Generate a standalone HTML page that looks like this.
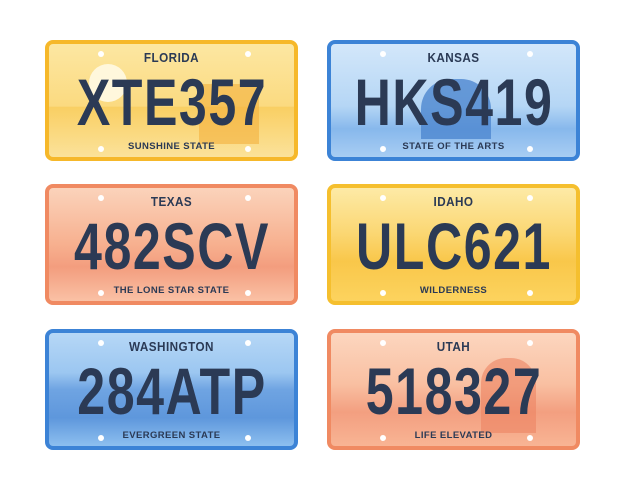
<html><head><style>
body{margin:0;width:626px;height:492px;background:#fff;position:relative;overflow:hidden;font-family:"Liberation Sans",sans-serif}
.p{position:absolute;width:245px;height:113px;border:4px solid;border-radius:8px;overflow:hidden}
.h{position:absolute;width:6px;height:6px;border-radius:50%;background:#fff}
.st{position:absolute;left:0;right:0;text-align:center;font-weight:bold;color:#2b3a55;font-size:13px;letter-spacing:0.5px;top:6px;transform:scaleX(0.9)}
.sl{position:absolute;left:0;right:0;text-align:center;font-weight:bold;color:#2b3a55;font-size:9.5px;letter-spacing:0.4px;bottom:5px}
.n{position:absolute;left:50%;top:25px;white-space:nowrap;font-weight:bold;color:#2b3a55;font-size:66px;line-height:66px;transform:translateX(-50%) scaleX(0.76);letter-spacing:2px}
</style></head><body>

<div class="p" style="left:45px;top:40px;border-color:#f6b82a;background:linear-gradient(#fce7a2 0%,#fbda80 55%,#f9cf63 56%,#fbe29a 100%)">
<div style="position:absolute;left:40px;top:20px;width:38px;height:38px;border-radius:50%;background:#fff7dc"></div>
<div style="position:absolute;left:150px;top:40px;width:60px;height:60px;background:#f4b13e;opacity:.6"></div>
<div class="st">FLORIDA</div><div class="n">XTE357</div><div class="sl">SUNSHINE STATE</div>
<div class="h" style="left:49px;top:7px"></div><div class="h" style="left:196px;top:7px"></div><div class="h" style="left:49px;top:102px"></div><div class="h" style="left:196px;top:102px"></div></div>

<div class="p" style="left:327px;top:40px;border-color:#3c83d6;background:linear-gradient(#d3e7fa 0%,#b5d6f5 55%,#87b8ec 75%,#a8cdf3 100%)">
<div style="position:absolute;left:90px;top:35px;width:70px;height:60px;background:#4e87cf;border-radius:30px 30px 0 0;opacity:.8"></div>
<div class="st">KANSAS</div><div class="n">HKS419</div><div class="sl">STATE OF THE ARTS</div>
<div class="h" style="left:49px;top:7px"></div><div class="h" style="left:196px;top:7px"></div><div class="h" style="left:49px;top:102px"></div><div class="h" style="left:196px;top:102px"></div></div>

<div class="p" style="left:45px;top:184px;border-color:#f08a62;background:linear-gradient(#fbd3bb 0%,#f7b08f 50%,#f39d7e 70%,#fac1a5 100%)">
<div class="st">TEXAS</div><div class="n">482SCV</div><div class="sl">THE LONE STAR STATE</div>
<div class="h" style="left:49px;top:7px"></div><div class="h" style="left:196px;top:7px"></div><div class="h" style="left:49px;top:102px"></div><div class="h" style="left:196px;top:102px"></div></div>

<div class="p" style="left:327px;top:184px;border-color:#f5bf2e;background:linear-gradient(#fdeaa6 0%,#fbd773 40%,#f9c74a 65%,#fcd35e 100%)">
<div class="st">IDAHO</div><div class="n">ULC621</div><div class="sl">WILDERNESS</div>
<div class="h" style="left:49px;top:7px"></div><div class="h" style="left:196px;top:7px"></div><div class="h" style="left:49px;top:102px"></div><div class="h" style="left:196px;top:102px"></div></div>

<div class="p" style="left:45px;top:329px;border-color:#3c83d6;background:linear-gradient(#b6d7f6 0%,#9cc7f1 35%,#6fa4e2 50%,#5e97dc 75%,#8dbfef 100%)">
<div class="st">WASHINGTON</div><div class="n">284ATP</div><div class="sl">EVERGREEN STATE</div>
<div class="h" style="left:49px;top:7px"></div><div class="h" style="left:196px;top:7px"></div><div class="h" style="left:49px;top:102px"></div><div class="h" style="left:196px;top:102px"></div></div>

<div class="p" style="left:327px;top:329px;border-color:#f08a62;background:linear-gradient(#fcd6bf 0%,#f9c0a2 45%,#f39f80 70%,#f8b494 100%)">
<div style="position:absolute;left:150px;top:25px;width:55px;height:75px;background:#ec8462;border-radius:25px 25px 0 0;opacity:.6"></div>
<div class="st">UTAH</div><div class="n">518327</div><div class="sl">LIFE ELEVATED</div>
<div class="h" style="left:49px;top:7px"></div><div class="h" style="left:196px;top:7px"></div><div class="h" style="left:49px;top:102px"></div><div class="h" style="left:196px;top:102px"></div></div>

</body></html>
